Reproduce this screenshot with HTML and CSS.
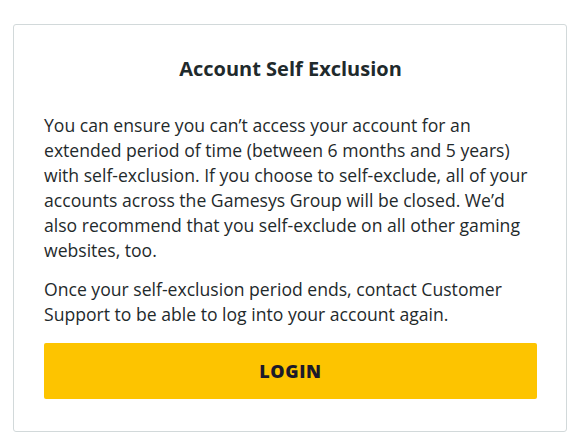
FILE: index.html
```
<!DOCTYPE html>
<html>
<head>
<meta charset="utf-8">
<link rel="stylesheet" href="styles.css">
</head>
<body>
<div class="card">
  <h1 class="title">Account Self Exclusion</h1>
  <p class="text">You can ensure you can’t access your account for an extended period of time (between 6 months and 5 years) with self-exclusion. If you choose to self-exclude, all of your accounts across the Gamesys Group will be closed. We’d also recommend that you self-exclude on all other gaming websites, too.</p>
  <p class="text">Once your self-exclusion period ends, contact Customer Support to be able to log into your account again.</p>
  <button class="btn">LOGIN</button>
</div>
</body>
</html>
```
FILE: styles.css
```
html, body {
  margin: 0;
  padding: 0;
  background: #ffffff;
}
body {
  padding: 24px 10px 0 13px;
  font-family: "Open Sans", "Noto Sans", sans-serif;
  color: #1f2a2c;
}
.card {
  width: 554px;
  height: 408px;
  box-sizing: border-box;
  border: 1px solid #d2d9da;
  border-radius: 3px;
  padding: 30px 29px 0 30px;
}
.title {
  margin: 0 0 30px;
  text-align: center;
  font-size: 20px;
  font-weight: 700;
  line-height: 28px;
  color: #1f2a2c;
}
.text {
  margin: 0 0 14px;
  font-size: 17.6px;
  line-height: 25px;
}
.btn {
  display: block;
  width: 100%;
  height: 56px;
  margin-top: 16px;
  border: none;
  border-radius: 2px;
  background: #fdc400;
  font-family: "Open Sans", sans-serif;
  font-weight: 800;
  font-size: 18px;
  letter-spacing: 0.6px;
  color: #1c1a2a;
}
```
